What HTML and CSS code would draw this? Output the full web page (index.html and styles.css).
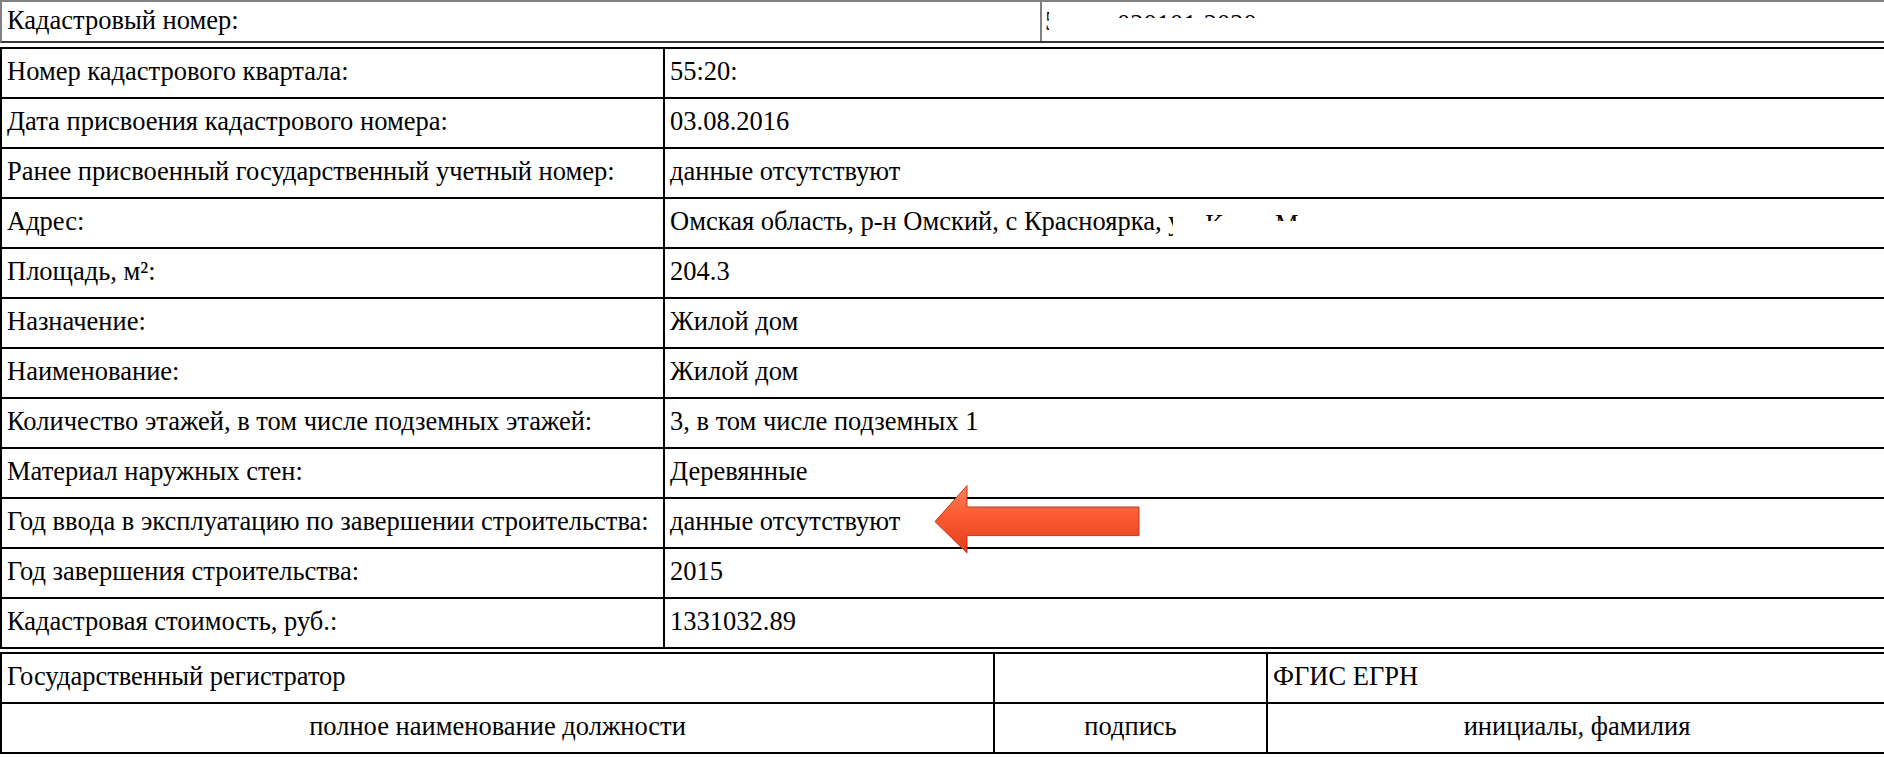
FILE: index.html
```html
<!DOCTYPE html>
<html lang="ru">
<head>
<meta charset="utf-8">
<title>Выписка</title>
<link rel="stylesheet" href="styles.css">
</head>
<body>
<table class="head">
  <tr>
    <td class="head-label">Кадастровый номер:</td>
    <td class="head-value"><span class="cut-5">5</span><span class="redact redact-num"><span class="redact-inner">020101:2020</span></span></td>
  </tr>
</table>

<div class="info-wrap">
  <table class="info">
    <tr><td class="key">Номер кадастрового квартала:</td><td class="val">55:20:</td></tr>
    <tr><td class="key">Дата присвоения кадастрового номера:</td><td class="val">03.08.2016</td></tr>
    <tr><td class="key">Ранее присвоенный государственный учетный номер:</td><td class="val">данные отсутствуют</td></tr>
    <tr><td class="key">Адрес:</td><td class="val">Омская область, р-н Омский, с Красноярка, <span class="cut-y">у</span><span class="redact redact-addr"><span class="redact-inner">К</span></span><span class="redact redact-addr2"><span class="redact-inner">М</span></span></td></tr>
    <tr><td class="key">Площадь, м²:</td><td class="val">204.3</td></tr>
    <tr><td class="key">Назначение:</td><td class="val">Жилой дом</td></tr>
    <tr><td class="key">Наименование:</td><td class="val">Жилой дом</td></tr>
    <tr><td class="key">Количество этажей, в том числе подземных этажей:</td><td class="val">3, в том числе подземных 1</td></tr>
    <tr><td class="key">Материал наружных стен:</td><td class="val">Деревянные</td></tr>
    <tr><td class="key">Год ввода в эксплуатацию по завершении строительства:</td><td class="val">данные отсутствуют</td></tr>
    <tr><td class="key">Год завершения строительства:</td><td class="val">2015</td></tr>
    <tr><td class="key">Кадастровая стоимость, руб.:</td><td class="val">1331032.89</td></tr>
  </table>
  <svg class="arrow" width="216" height="80" viewBox="0 0 216 80" aria-hidden="true">
    <defs>
      <linearGradient id="ag" x1="0" y1="0" x2="0" y2="1">
        <stop offset="0" stop-color="#ff8157"/>
        <stop offset="0.45" stop-color="#fb5a33"/>
        <stop offset="1" stop-color="#e23f1b"/>
      </linearGradient>
    </defs>
    <polygon points="6,40.6 38,4.6 38,26 210,26 210,54.6 38,54.6 38,72" fill="url(#ag)" stroke="#c0391d" stroke-width="1" stroke-linejoin="miter"/>
  </svg>
</div>

<table class="sign">
  <tr>
    <td class="sign-a">Государственный регистратор</td>
    <td class="sign-b"></td>
    <td class="sign-c">ФГИС ЕГРН</td>
  </tr>
  <tr>
    <td class="sign-a center">полное наименование должности</td>
    <td class="sign-b center">подпись</td>
    <td class="sign-c center">инициалы, фамилия</td>
  </tr>
</table>
</body>
</html>
```

FILE: styles.css
```css
html, body {
  margin: 0;
  padding: 0;
  background: #fff;
}
body {
  width: 1884px;
  height: 758px;
  overflow: hidden;
  font-family: "Liberation Serif", "Times New Roman", serif;
  font-size: 26.5px;
  color: #000;
}

table {
  width: 1888px;
  table-layout: fixed;
}

td {
  padding: 0 0 2px 5px;
  vertical-align: middle;
  white-space: nowrap;
  text-align: left;
  line-height: 1.1;
}

/* top table */
.head {
  border-collapse: separate;
  border-spacing: 0;
  border-top: 2px solid #808080;
  border-left: 2px solid #808080;
  border-bottom: 2px solid #3a3a3a;
  border-right: 2px solid #3a3a3a;
}
.head td {
  height: 37px;
}
.head-label {
  width: 1033px;
  border-right: 2px solid #808080;
}
.head-value {
  padding-left: 3px;
}

.cut-5 {
  display: inline-block;
  width: 4px;
  overflow: hidden;
  vertical-align: middle;
}
.redact {
  display: inline-block;
  overflow: hidden;
  vertical-align: top;
}
.redact-inner {
  display: block;
}
.redact-num {
  height: 8px;
  margin-top: 5px;
  margin-left: 68px;
}
.redact-addr,
.redact-addr2 {
  height: 9px;
  margin-top: 5px;
}
.redact-addr .redact-inner,
.redact-addr2 .redact-inner {
  margin-top: -2px;
}
.redact-addr {
  margin-left: 32px;
}
.redact-addr2 {
  margin-left: 52px;
}
.cut-y {
  display: inline-block;
  width: 5px;
  overflow: hidden;
  vertical-align: bottom;
}

/* main info table */
.info-wrap {
  position: relative;
  margin-top: 4px;
}
.info {
  border-collapse: collapse;
  border: 2px solid #000;
}
.info tr,
.sign tr {
  height: 50px;
}
.info td {
  border: 2px solid #000;
}
.key {
  width: 656px;
}

.arrow {
  position: absolute;
  left: 929px;
  top: 434px;
}

/* signature table */
.sign {
  margin-top: 3px;
  border-collapse: collapse;
  border: 2px solid #000;
}
.sign td {
  border: 2px solid #000;
}
.sign-a {
  width: 986px;
}
.sign-b {
  width: 266px;
}
.center {
  text-align: center;
  padding-left: 0;
}
```
